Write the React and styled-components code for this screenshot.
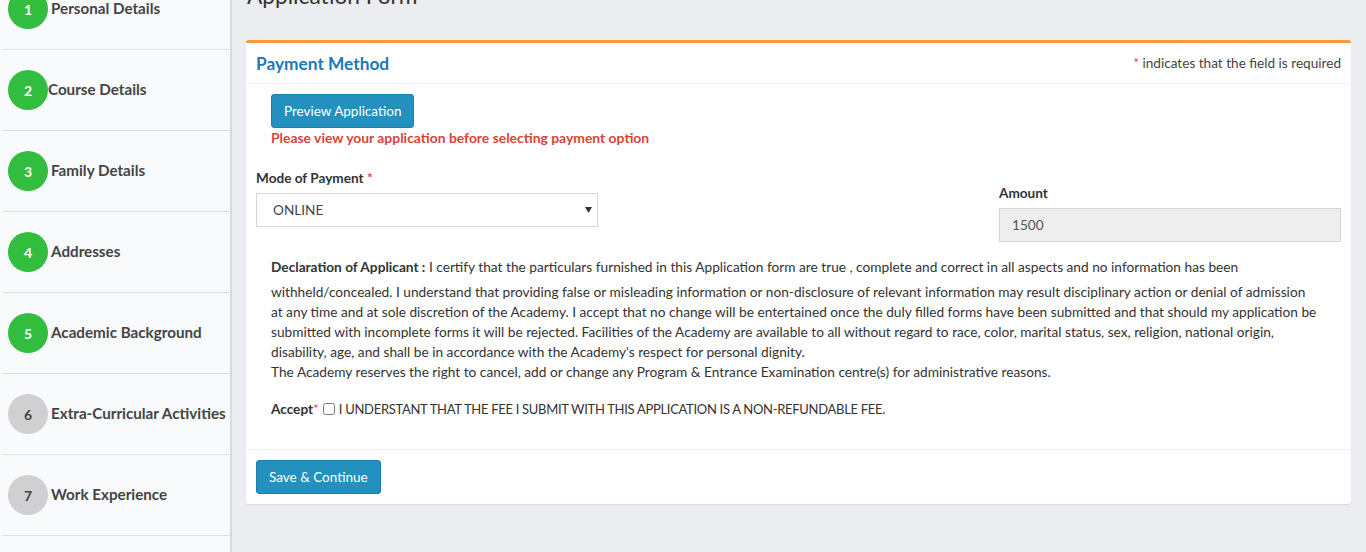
import styled, { createGlobalStyle } from "styled-components";

const GlobalStyle = createGlobalStyle`
  html, body {
    margin: 0;
    padding: 0;
    overflow: hidden;
  }
  body {
    background: #ecedf1;
    font-family: Lato, "Liberation Sans", sans-serif;
    font-size: 13.6px;
    color: #333;
  }
  * {
    box-sizing: border-box;
  }
`;

const Page = styled.div`
  display: flex;
  height: 552px;
`;

const Sidebar = styled.nav`
  width: 232px;
  flex-shrink: 0;
  background: #f9fafc;
  border-right: 2px solid #d9dadf;
  overflow: hidden;
`;

const StepList = styled.ul`
  list-style: none;
  margin: -31px 0 0 2px;
  padding: 0;
`;

const Step = styled.li`
  height: 81px;
  display: flex;
  align-items: center;
  padding-left: 6px;
  border-bottom: 1px solid #dfe0e4;
`;

const StepNumber = styled.span`
  width: 40px;
  height: 40px;
  border-radius: 50%;
  flex-shrink: 0;
  display: flex;
  align-items: center;
  justify-content: center;
  font-weight: 700;
  font-size: 14px;
  background: ${(p) => (p.done ? "#33bd3e" : "#d0d0d2")};
  color: ${(p) => (p.done ? "#fff" : "#444")};
`;

const StepLabel = styled.span`
  margin-left: ${(p) => (p.tight ? "0" : "3px")};
  margin-bottom: 2px;
  font-weight: 700;
  font-size: 15.2px;
  color: #444;
  white-space: nowrap;
`;

const Main = styled.main`
  flex: 1;
  padding: 0 15px 0 14px;
`;

const Title = styled.h1`
  margin: -16px 0 32px 1px;
  font-size: 22.7px;
  line-height: 24px;
  font-weight: 400;
  color: #333;
`;

const Card = styled.section`
  background: #fff;
  border-top: 3px solid #f29c3f;
  border-radius: 3px;
  box-shadow: 0 1px 1px rgba(0, 0, 0, 0.08);
`;

const CardHeader = styled.div`
  height: 41px;
  display: flex;
  align-items: center;
  justify-content: space-between;
  padding: 0 10px;
  border-bottom: 1px solid #f2f2f2;
`;

const CardTitle = styled.h3`
  margin: 0;
  font-size: 17.3px;
  font-weight: 700;
  color: #1d78b6;
`;

const Note = styled.span`
  font-size: 13.6px;
  color: #444;
`;

const Req = styled.span`
  color: #dd4b39;
`;

const CardBody = styled.div`
  padding: 10px;
`;

const Indent = styled.div`
  padding: 0 15px;
  line-height: 20px;
`;

const Button = styled.button`
  height: 34px;
  padding: 0 12px;
  border: 1px solid #1e80aa;
  border-radius: 3px;
  background: #2390be;
  color: #fff;
  font-family: inherit;
  font-size: 13.5px;
  cursor: pointer;
`;

const Warning = styled.div`
  font-weight: 700;
  font-size: 13.9px;
  color: #d9433a;
`;

const FormRow = styled.div`
  display: flex;
  justify-content: space-between;
  align-items: flex-start;
  margin-top: 20px;
`;

const Field = styled.div`
  width: 342px;
  margin-top: ${(p) => p.offset || 0}px;
`;

const Label = styled.label`
  display: inline-block;
  margin-bottom: 5px;
  font-weight: 700;
  line-height: 20px;
  color: #333;
`;

const SelectWrap = styled.div`
  position: relative;
`;

const Select = styled.select`
  width: 100%;
  height: 34px;
  padding: 0 16px;
  border: 1px solid #d2d6de;
  border-radius: 0;
  background: #fff;
  appearance: none;
  font-family: inherit;
  font-size: 13.6px;
  color: #444;
`;

const Caret = styled.svg`
  position: absolute;
  right: 6px;
  top: 14px;
  pointer-events: none;
`;

const Input = styled.input`
  width: 100%;
  height: 34px;
  padding: 0 12px;
  border: 1px solid #d2d6de;
  background: #eee;
  font-family: inherit;
  font-size: 13.6px;
  color: #555;
`;

const Declaration = styled(Indent)`
  margin-top: 15px;
  padding-right: 0;
  font-size: 13.7px;
  white-space: nowrap;
  color: #333;
`;

const AcceptRow = styled(Indent)`
  margin: 17px 0 15px;
`;

const Check = styled.input`
  width: 12px;
  height: 12px;
  margin: 0 4px 0 4px;
  vertical-align: -1px;
`;

const AcceptText = styled.span`
  font-size: 13px;
  letter-spacing: -0.3px;
  color: #333;
`;

const CardFooter = styled.div`
  padding: 10px;
  border-top: 1px solid #f2f2f2;
`;

const steps = [
  { n: 1, label: "Personal Details", done: true },
  { n: 2, label: "Course Details", done: true, tight: true },
  { n: 3, label: "Family Details", done: true },
  { n: 4, label: "Addresses", done: true },
  { n: 5, label: "Academic Background", done: true },
  { n: 6, label: "Extra-Curricular Activities" },
  { n: 7, label: "Work Experience" },
];

export default function App() {
  return (
    <Page>
      <GlobalStyle />
      <Sidebar>
        <StepList>
          {steps.map((s) => (
            <Step key={s.n}>
              <StepNumber done={s.done}>{s.n}</StepNumber>
              <StepLabel tight={s.tight}>{s.label}</StepLabel>
            </Step>
          ))}
        </StepList>
      </Sidebar>
      <Main>
        <Title>Application Form</Title>
        <Card>
          <CardHeader>
            <CardTitle>Payment Method</CardTitle>
            <Note>
              <Req>*</Req> indicates that the field is required
            </Note>
          </CardHeader>
          <CardBody>
            <Indent>
              <Button>Preview Application</Button>
              <Warning>Please view your application before selecting payment option</Warning>
            </Indent>
            <FormRow>
              <Field>
                <Label>
                  Mode of Payment <Req>*</Req>
                </Label>
                <SelectWrap>
                  <Select defaultValue="ONLINE">
                    <option>ONLINE</option>
                  </Select>
                  <Caret width="7" height="6" viewBox="0 0 7 6">
                    <path d="M0 0h7L3.5 6z" fill="#333" />
                  </Caret>
                </SelectWrap>
              </Field>
              <Field offset={15}>
                <Label>Amount</Label>
                <Input readOnly value="1500" />
              </Field>
            </FormRow>
            <Declaration>
              <Label>Declaration of Applicant :</Label> I certify that the particulars furnished in
              this Application form are true , complete and correct in all aspects and no
              information has been
              <br />
              withheld/concealed. I understand that providing false or misleading information or
              non-disclosure of relevant information may result disciplinary action or denial of
              admission
              <br />
              at any time and at sole discretion of the Academy. I accept that no change will be
              entertained once the duly filled forms have been submitted and that should my
              application be
              <br />
              submitted with incomplete forms it will be rejected. Facilities of the Academy are
              available to all without regard to race, color, marital status, sex, religion,
              national origin,
              <br />
              disability, age, and shall be in accordance with the Academy's respect for personal
              dignity.
              <br />
              The Academy reserves the right to cancel, add or change any Program &amp; Entrance
              Examination centre(s) for administrative reasons.
            </Declaration>
            <AcceptRow>
              <Label>Accept</Label>
              <Req>*</Req>
              <Check type="checkbox" />
              <AcceptText>
                I UNDERSTANT THAT THE FEE I SUBMIT WITH THIS APPLICATION IS A NON-REFUNDABLE FEE.
              </AcceptText>
            </AcceptRow>
          </CardBody>
          <CardFooter>
            <Button>Save &amp; Continue</Button>
          </CardFooter>
        </Card>
      </Main>
    </Page>
  );
}
